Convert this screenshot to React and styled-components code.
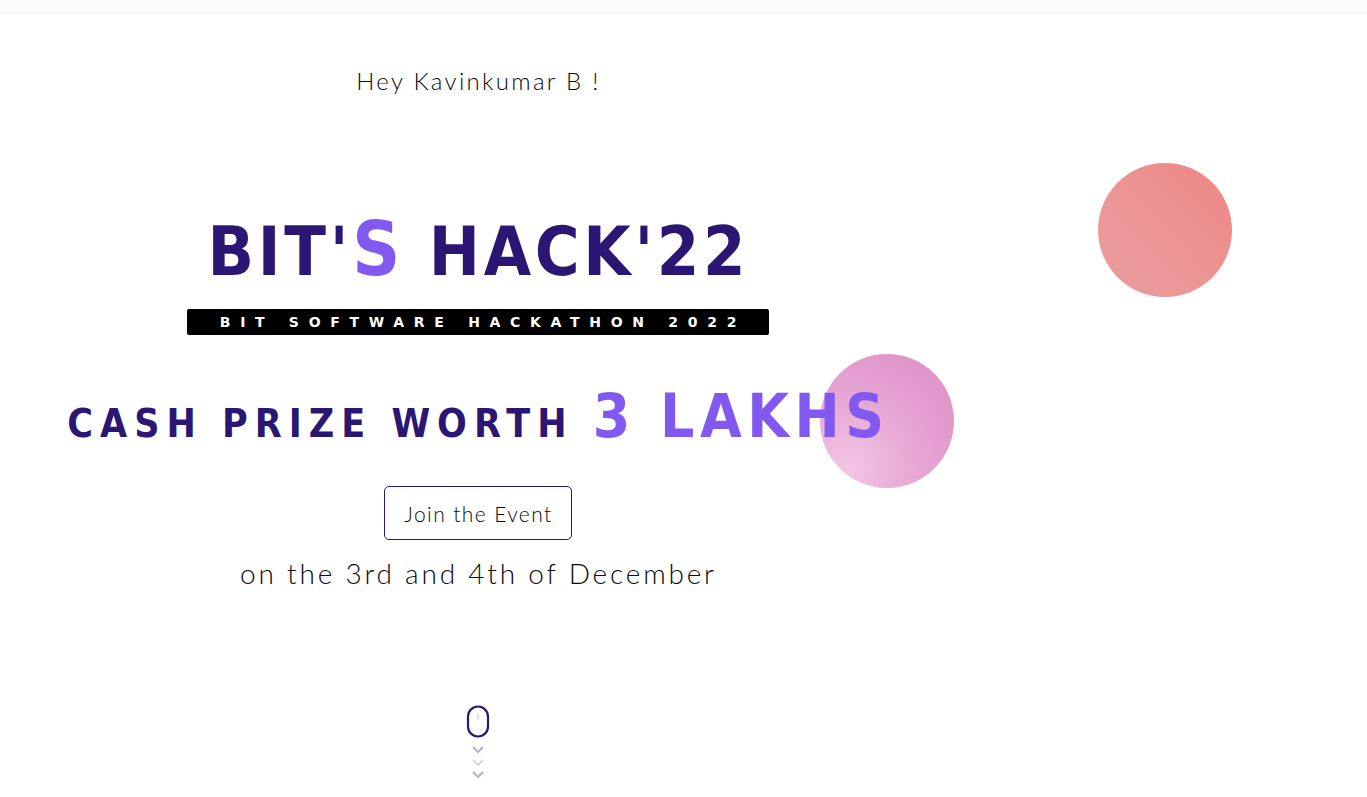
import React from 'react';
import styled, { createGlobalStyle } from 'styled-components';

const GlobalStyle = createGlobalStyle`
  html, body {
    margin: 0;
    padding: 0;
    background: #ffffff;
    font-family: 'Lato', 'Noto Sans', sans-serif;
  }
`

const TopBar = styled.div`
  height: 14px;
  background: #fbfbfd;
  box-shadow: 0 1px 2px rgba(0, 0, 0, 0.02);
`
const Hero = styled.section`
  position: relative;
  height: 783px;
  overflow: hidden;
`
const Column = styled.div`
  position: relative;
  z-index: 1;
  width: 70%;
  display: flex;
  flex-direction: column;
  align-items: center;
  padding-top: 52px;
`
const Greeting = styled.p`
  margin: 0;
  font-family: 'Lato', sans-serif;
  font-weight: 300;
  font-size: 24px;
  letter-spacing: 2.3px;
  color: #0a0a0a;
`
const Title = styled.h1`
  margin: 118px 0 0;
  font-family: 'DejaVu Sans Condensed', 'DejaVu Sans', sans-serif;
  font-weight: 700;
  font-size: 68px;
  line-height: 72px;
  letter-spacing: 3.7px;
  color: #2c1674;
  white-space: nowrap;

  > span {
    color: #8159f1;
    font-size: 74px;
  }
`
const Tagline = styled.div`
  margin-top: 21px;
  width: 582px;
  height: 26px;
  background: #000;
  border-radius: 2px;
  display: flex;
  align-items: center;
  justify-content: center;
  padding-left: 9px;
  box-sizing: border-box;
  font-family: 'DejaVu Sans', sans-serif;
  font-weight: 700;
  font-size: 14px;
  letter-spacing: 9.7px;
  color: #fff;
  white-space: nowrap;
`
const Prize = styled.h2`
  margin: 49px 0 0;
  font-family: 'DejaVu Sans Condensed', 'DejaVu Sans', sans-serif;
  font-weight: 700;
  font-size: 39px;
  line-height: 64px;
  letter-spacing: 7px;
  color: #2c1674;
  white-space: nowrap;

  > span {
    color: #8159f1;
    font-size: 60px;
    letter-spacing: 5.5px;
  }
`
const JoinButton = styled.button`
  margin-top: 30px;
  width: 188px;
  height: 54px;
  border: 1px solid #2c1674;
  border-radius: 5px;
  background: #fff;
  font-family: 'Lato', sans-serif;
  font-weight: 300;
  font-size: 21px;
  letter-spacing: 1.4px;
  color: #0a0a0a;
  cursor: pointer;
`
const DateLine = styled.p`
  margin: 16px 0 0;
  font-family: 'Lato', sans-serif;
  font-weight: 300;
  font-size: 28px;
  letter-spacing: 2.8px;
  color: #0a0a0a;
`
const ScrollHint = styled.div`
  margin-top: 115px;
  display: flex;
  flex-direction: column;
  align-items: center;
`
const Chevron = styled.svg`
  display: block;
  margin-top: ${ props => props.first ? '6px' : '0' };
  opacity: ${ props => props.fade };
`
const Bubble = styled.div`
  position: absolute;
  width: 134px;
  height: 134px;
  border-radius: 50%;
  left: ${ props => props.x }px;
  top: ${ props => props.y }px;
  background: ${ props => props.bg };
`

const Mouse = () => (
  <svg width="24" height="33" viewBox="0 0 24 33">
    <rect x="2" y="1.5" width="20" height="30" rx="10" fill="none" stroke="#2c1674" strokeWidth="2.2" />
    <line x1="12" y1="9" x2="12" y2="15" stroke="#e4e0ee" strokeWidth="2" />
  </svg>
);

const Arrow = ({ fade, first }) => (
  <Chevron width="14" height="12.5" viewBox="0 0 14 12.5" fade={fade} first={first}>
    <path d="M2 3 L7 8 L12 3" fill="none" stroke="#b6acd9" strokeWidth="2" />
  </Chevron>
);

export default function App() {
  return (
    <>
      <GlobalStyle />
      <TopBar />
      <Hero>
        <Column>
          <Greeting>Hey Kavinkumar B !</Greeting>
          <Title>BIT'<span>S</span> HACK'22</Title>
          <Tagline>BIT SOFTWARE HACKATHON 2022</Tagline>
          <Prize>CASH PRIZE WORTH <span>3 LAKHS</span></Prize>
          <JoinButton>Join the Event</JoinButton>
          <DateLine>on the 3rd and 4th of December</DateLine>
          <ScrollHint>
            <Mouse />
            <Arrow fade={1} first />
            <Arrow fade={0.5} />
            <Arrow fade={1} />
          </ScrollHint>
        </Column>
        <Bubble x={1098} y={149} bg="linear-gradient(225deg, #ec8683 0%, #ec9797 60%, #eb9a9a 100%)" />
        <Bubble x={820} y={340} bg="radial-gradient(circle at 20% 85%, #f2c6e4 0%, #e6a6d4 45%, #dc8cc3 100%)" />
      </Hero>
    </>
  );
}
